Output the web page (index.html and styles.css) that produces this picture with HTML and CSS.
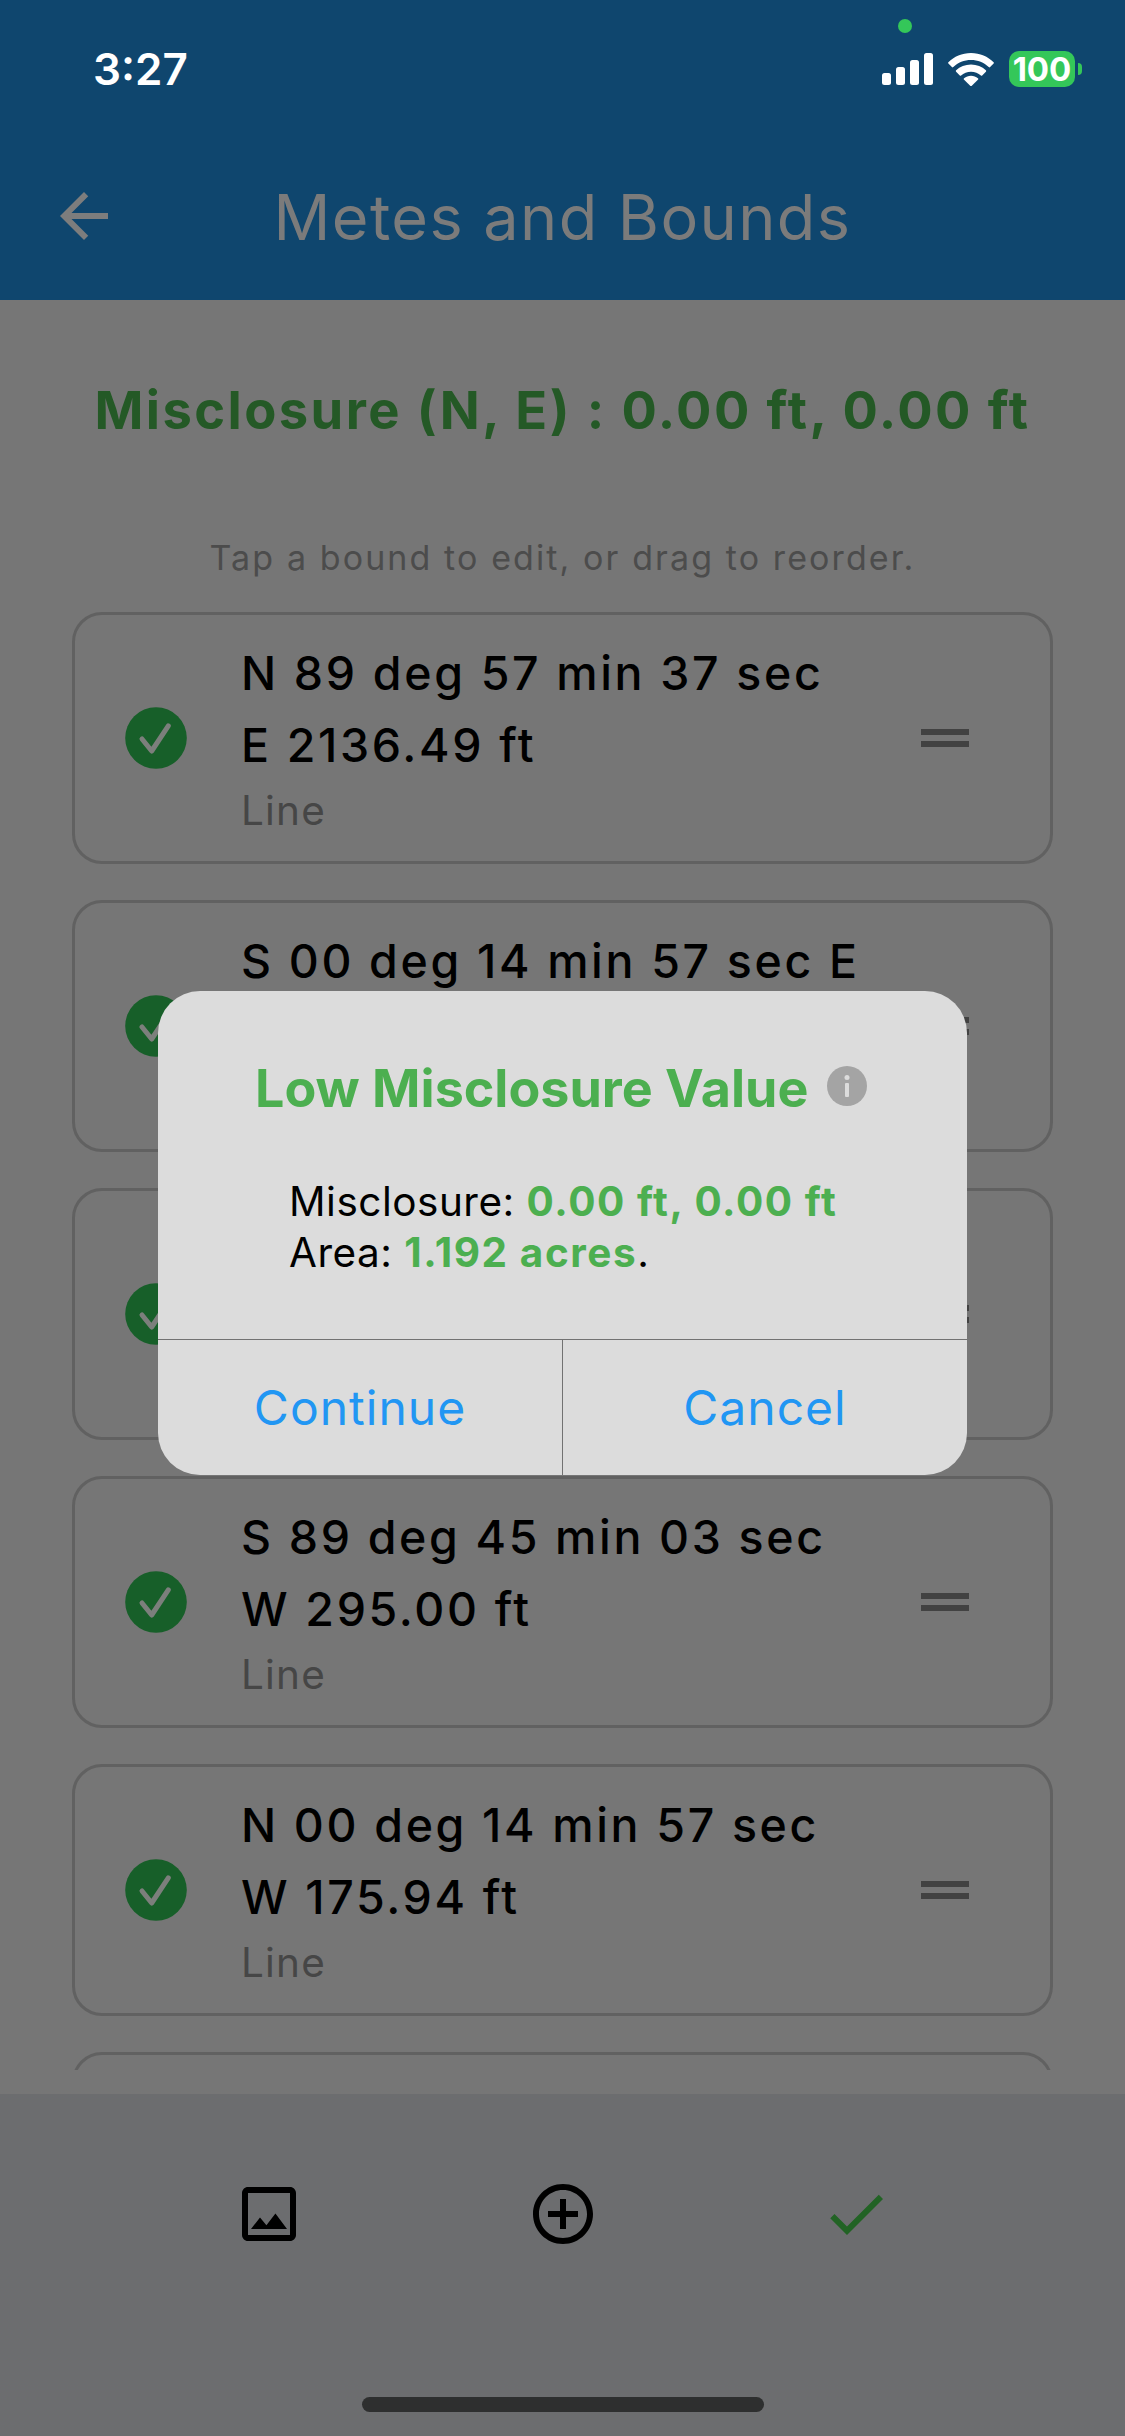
FILE: index.html
```html
<!DOCTYPE html>
<html lang="en">
<head>
  <meta charset="UTF-8" />
  <meta name="viewport" content="width=device-width, initial-scale=1.0"/>
  <title>Metes and Bounds</title>
  <link rel="stylesheet" href="styles.css">
</head>
<body>
  <!-- shared icons -->
  <svg class="defs" width="0" height="0">
    <symbol id="check-circle" viewBox="0 0 62 62">
      <circle cx="31" cy="31" r="30.8" fill="#175f29"/>
      <path d="M17 32 L26.700 44 L43.300 18.800" fill="none" stroke="#7c7f7c" stroke-width="5" stroke-linecap="round" stroke-linejoin="round"/>
    </symbol>
    <symbol id="drag" viewBox="0 0 24 24">
      <path d="M20 9H4v2h16V9zM4 15h16v-2H4v2z"/>
    </symbol>
  </svg>

  <div class="app">
    <header class="header">
      <div class="status-bar">
        <span class="time">3:27</span>
        <div class="status-icons">
          <svg class="signal" viewBox="0 0 51 32">
            <rect x="0" y="20" width="9" height="12" rx="2.5"/>
            <rect x="14" y="14" width="9" height="18" rx="2.5"/>
            <rect x="28" y="7" width="9" height="25" rx="2.5"/>
            <rect x="42" y="0" width="9" height="32" rx="2.5"/>
          </svg>
          <svg class="wifi" viewBox="0 0 46 33">
            <path d="M23 0C14 0 6 3.6 0.4 9.2q-.6.7 0 1.3l3.5 3.6q.7.6 1.4 0C10 9.6 16.2 7 23 7s13 2.6 17.700 7.100q.7.6 1.400 0l3.500-3.600q.6-.6 0-1.300C40 3.600 32 0 23 0z"/>
            <path d="M23 11.500C17.200 11.500 12 13.700 8.100 17.300q-.7.7 0 1.400l3.700 3.700q.6.500 1.300 0C15.700 20.100 19.200 18.700 23 18.700s7.300 1.400 9.900 3.700q.7.500 1.300 0l3.700-3.700q.7-.7 0-1.400C34 13.700 28.800 11.500 23 11.500z"/>
            <path d="M23 22.800c-2.700 0-5 .9-6.900 2.400q-.8.7 0 1.500l6.100 6q.8.700 1.600 0l6.100-6q.8-.8 0-1.500C28 23.700 25.700 22.800 23 22.800z"/>
          </svg>
          <div class="battery"><span>100</span></div>
          <div class="battery-tip"></div>
        </div>
        <div class="camera-dot"></div>
      </div>
      <div class="title-bar">
        <svg class="back" viewBox="0 0 24 24"><path d="M20 11H7.830l5.590-5.590L12 4l-8 8 8 8 1.410-1.410L7.830 13H20v-2z"/></svg>
        <h1>Metes and Bounds</h1>
      </div>
    </header>

    <main class="content">
      <h2 class="misclosure">Misclosure (N, E) : 0.00 ft, 0.00 ft</h2>
      <p class="hint">Tap a bound to edit, or drag to reorder.</p>

      <div class="bounds">
        <div class="bound">
          <svg class="check"><use href="#check-circle"/></svg>
          <div class="bound-text">
            <div class="bearing">N 89 deg 57 min 37 sec<br>E 2136.49 ft</div>
            <div class="type">Line</div>
          </div>
          <svg class="drag"><use href="#drag"/></svg>
        </div>
        <div class="bound">
          <svg class="check"><use href="#check-circle"/></svg>
          <div class="bound-text">
            <div class="bearing">S 00 deg 14 min 57 sec E</div>
          </div>
          <svg class="drag"><use href="#drag"/></svg>
        </div>
        <div class="bound">
          <svg class="check"><use href="#check-circle"/></svg>
          <div class="bound-text"></div>
          <svg class="drag"><use href="#drag"/></svg>
        </div>
        <div class="bound">
          <svg class="check"><use href="#check-circle"/></svg>
          <div class="bound-text">
            <div class="bearing">S 89 deg 45 min 03 sec<br>W 295.00 ft</div>
            <div class="type">Line</div>
          </div>
          <svg class="drag"><use href="#drag"/></svg>
        </div>
        <div class="bound">
          <svg class="check"><use href="#check-circle"/></svg>
          <div class="bound-text">
            <div class="bearing">N 00 deg 14 min 57 sec<br>W 175.94 ft</div>
            <div class="type">Line</div>
          </div>
          <svg class="drag"><use href="#drag"/></svg>
        </div>
        <div class="bound"></div>
      </div>
    </main>

    <footer class="toolbar">
      <div class="tools">
        <svg viewBox="0 0 24 24"><path d="M19 5v14H5V5h14m0-2H5c-1.100 0-2 .9-2 2v14c0 1.100.9 2 2 2h14c1.100 0 2-.9 2-2V5c0-1.100-.9-2-2-2zm-4.860 8.860l-3 3.870L9 13.140 6 17h12l-3.860-5.140z"/></svg>
        <svg viewBox="0 0 24 24"><path d="M13 7h-2v4H7v2h4v4h2v-4h4v-2h-4V7zm-1-5C6.480 2 2 6.480 2 12s4.480 10 10 10 10-4.480 10-10S17.520 2 12 2zm0 18c-4.410 0-8-3.590-8-8s3.590-8 8-8 8 3.590 8 8-3.590 8-8 8z"/></svg>
        <svg class="done" viewBox="0 0 24 24"><path d="M9 16.170L4.830 12l-1.420 1.410L9 19 21 7l-1.410-1.410z"/></svg>
      </div>
      <div class="home-indicator"></div>
    </footer>
  </div>

  <div class="dialog">
    <div class="dialog-body">
      <div class="dialog-title">
        <span>Low Misclosure Value</span>
        <svg class="info" viewBox="0 0 40 40">
          <circle cx="20" cy="20" r="20" fill="#a4a4a4"/>
          <circle cx="20" cy="11.500" r="2.500" fill="#dcdcdc"/>
          <rect x="18" y="17" width="4" height="14" rx="1" fill="#dcdcdc"/>
        </svg>
      </div>
      <div class="dialog-text">
        Misclosure: <b>0.00 ft, 0.00 ft</b><br>
        Area: <b>1.192 acres</b>.
      </div>
    </div>
    <div class="dialog-actions">
      <button>Continue</button>
      <button>Cancel</button>
    </div>
  </div>
</body>
</html>
```
FILE: styles.css
```css
* {
  box-sizing: border-box;
}

body {
  margin: 0;
  font-family: Inter, "Liberation Sans", sans-serif;
  background-color: #767676;
  color: #000;
}

.defs {
  position: absolute;
}

.app {
  display: flex;
  flex-direction: column;
  height: 2436px;
  overflow: hidden;
}

/* header */
.header {
  height: 300px;
  background-color: #0f466e;
}

.status-bar {
  position: relative;
  display: flex;
  justify-content: space-between;
  align-items: center;
  height: 138px;
  padding: 0 43px 0 93px;
  color: #fff;
}

.time {
  font-size: 44px;
  font-weight: 600;
}

.status-icons {
  display: flex;
  align-items: center;
}

.signal {
  width: 51px;
  height: 32px;
  margin-right: 15px;
  fill: #fff;
}

.wifi {
  width: 46px;
  height: 33px;
  margin-right: 15px;
  fill: #fff;
}

.battery {
  display: flex;
  align-items: center;
  justify-content: center;
  width: 66px;
  height: 36px;
  border-radius: 10px;
  background-color: #34c759;
  font-size: 33px;
  font-weight: 700;
}

.battery-tip {
  width: 4px;
  height: 12px;
  margin-left: 3px;
  border-radius: 0 4px 4px 0;
  background-color: #34c759;
}

.camera-dot {
  position: absolute;
  top: 19px;
  left: 898px;
  width: 14px;
  height: 14px;
  border-radius: 50%;
  background-color: #34c759;
}

.title-bar {
  display: grid;
  grid-template-columns: 72px 1fr 72px;
  align-items: center;
  height: 156px;
  padding: 0 48px;
}

.back {
  width: 72px;
  height: 72px;
  fill: #7d7d7d;
}

h1 {
  margin: 2px 0 0;
  text-align: center;
  font-size: 63px;
  font-weight: 400;
  letter-spacing: 1.4px;
  color: #7b7b7b;
}

/* list */
.content {
  display: flex;
  flex-direction: column;
  flex: 1;
  min-height: 0;
  padding: 0 72px 24px;
}

.misclosure {
  margin: 74px -30px 0;
  line-height: 72px;
  text-align: center;
  white-space: nowrap;
  font-size: 52.5px;
  font-weight: 700;
  letter-spacing: 2.4px;
  color: #245926;
}

.hint {
  margin: 88px 0 30px;
  line-height: 48px;
  text-align: center;
  font-size: 34px;
  letter-spacing: 2.1px;
  color: #4c4c4c;
}

.bounds {
  display: flex;
  flex-direction: column;
  gap: 36px;
  flex: 1;
  min-height: 0;
  overflow: hidden;
}

.bound {
  display: flex;
  align-items: center;
  flex: none;
  height: 252px;
  padding: 0 69px 0 50px;
  border: 3px solid #616161;
  border-radius: 30px;
}

.check {
  width: 62px;
  height: 62px;
}

.bound-text {
  flex: 1;
  align-self: stretch;
  padding: 22px 0 0 54px;
}

.bearing {
  line-height: 72px;
  font-size: 46.5px;
  font-weight: 500;
  letter-spacing: 2.65px;
  white-space: nowrap;
}

.type {
  line-height: 60px;
  font-size: 40.5px;
  letter-spacing: 1.2px;
  color: #464646;
}

.drag {
  width: 72px;
  height: 72px;
  fill: #424242;
}

/* bottom bar */
.toolbar {
  display: flex;
  flex-direction: column;
  align-items: center;
  justify-content: space-between;
  height: 342px;
  padding: 84px 0 24px;
  background-color: #6c6d6f;
}

.tools {
  display: flex;
  justify-content: space-between;
  width: 659px;
}

.tools svg {
  width: 72px;
  height: 72px;
}

.tools .done {
  fill: #226325;
}

.home-indicator {
  width: 402px;
  height: 15px;
  border-radius: 8px;
  background-color: #2e2f2f;
}

/* dialog */
.dialog {
  position: absolute;
  top: 991px;
  left: 158px;
  width: 809px;
  height: 484px;
  display: flex;
  flex-direction: column;
  border-radius: 42px;
  overflow: hidden;
  background-color: #dcdcdc;
}

.dialog-body {
  flex: 1;
  padding: 62px 0 0;
}

.dialog-title {
  display: flex;
  align-items: center;
  padding-left: 97px;
  line-height: 72px;
  font-size: 52px;
  font-weight: 700;
  white-space: nowrap;
  color: #4caf50;
}

.info {
  width: 40px;
  height: 40px;
  margin: -6px 0 0 19px;
}

.dialog-text {
  margin-top: 51px;
  padding-left: 131px;
  line-height: 51px;
  font-size: 40.5px;
  letter-spacing: 0.5px;
  white-space: nowrap;
}

.dialog-text b {
  font-weight: 700;
  letter-spacing: 1.55px;
  color: #4caf50;
}

.dialog-actions {
  display: flex;
  height: 136px;
  border-top: 1px solid #727272;
}

.dialog-actions button {
  flex: 1;
  border: 0;
  background: none;
  font-family: inherit;
  font-size: 48px;
  letter-spacing: 1px;
  color: #2196f3;
}

.dialog-actions button + button {
  border-left: 1px solid #727272;
}
```
